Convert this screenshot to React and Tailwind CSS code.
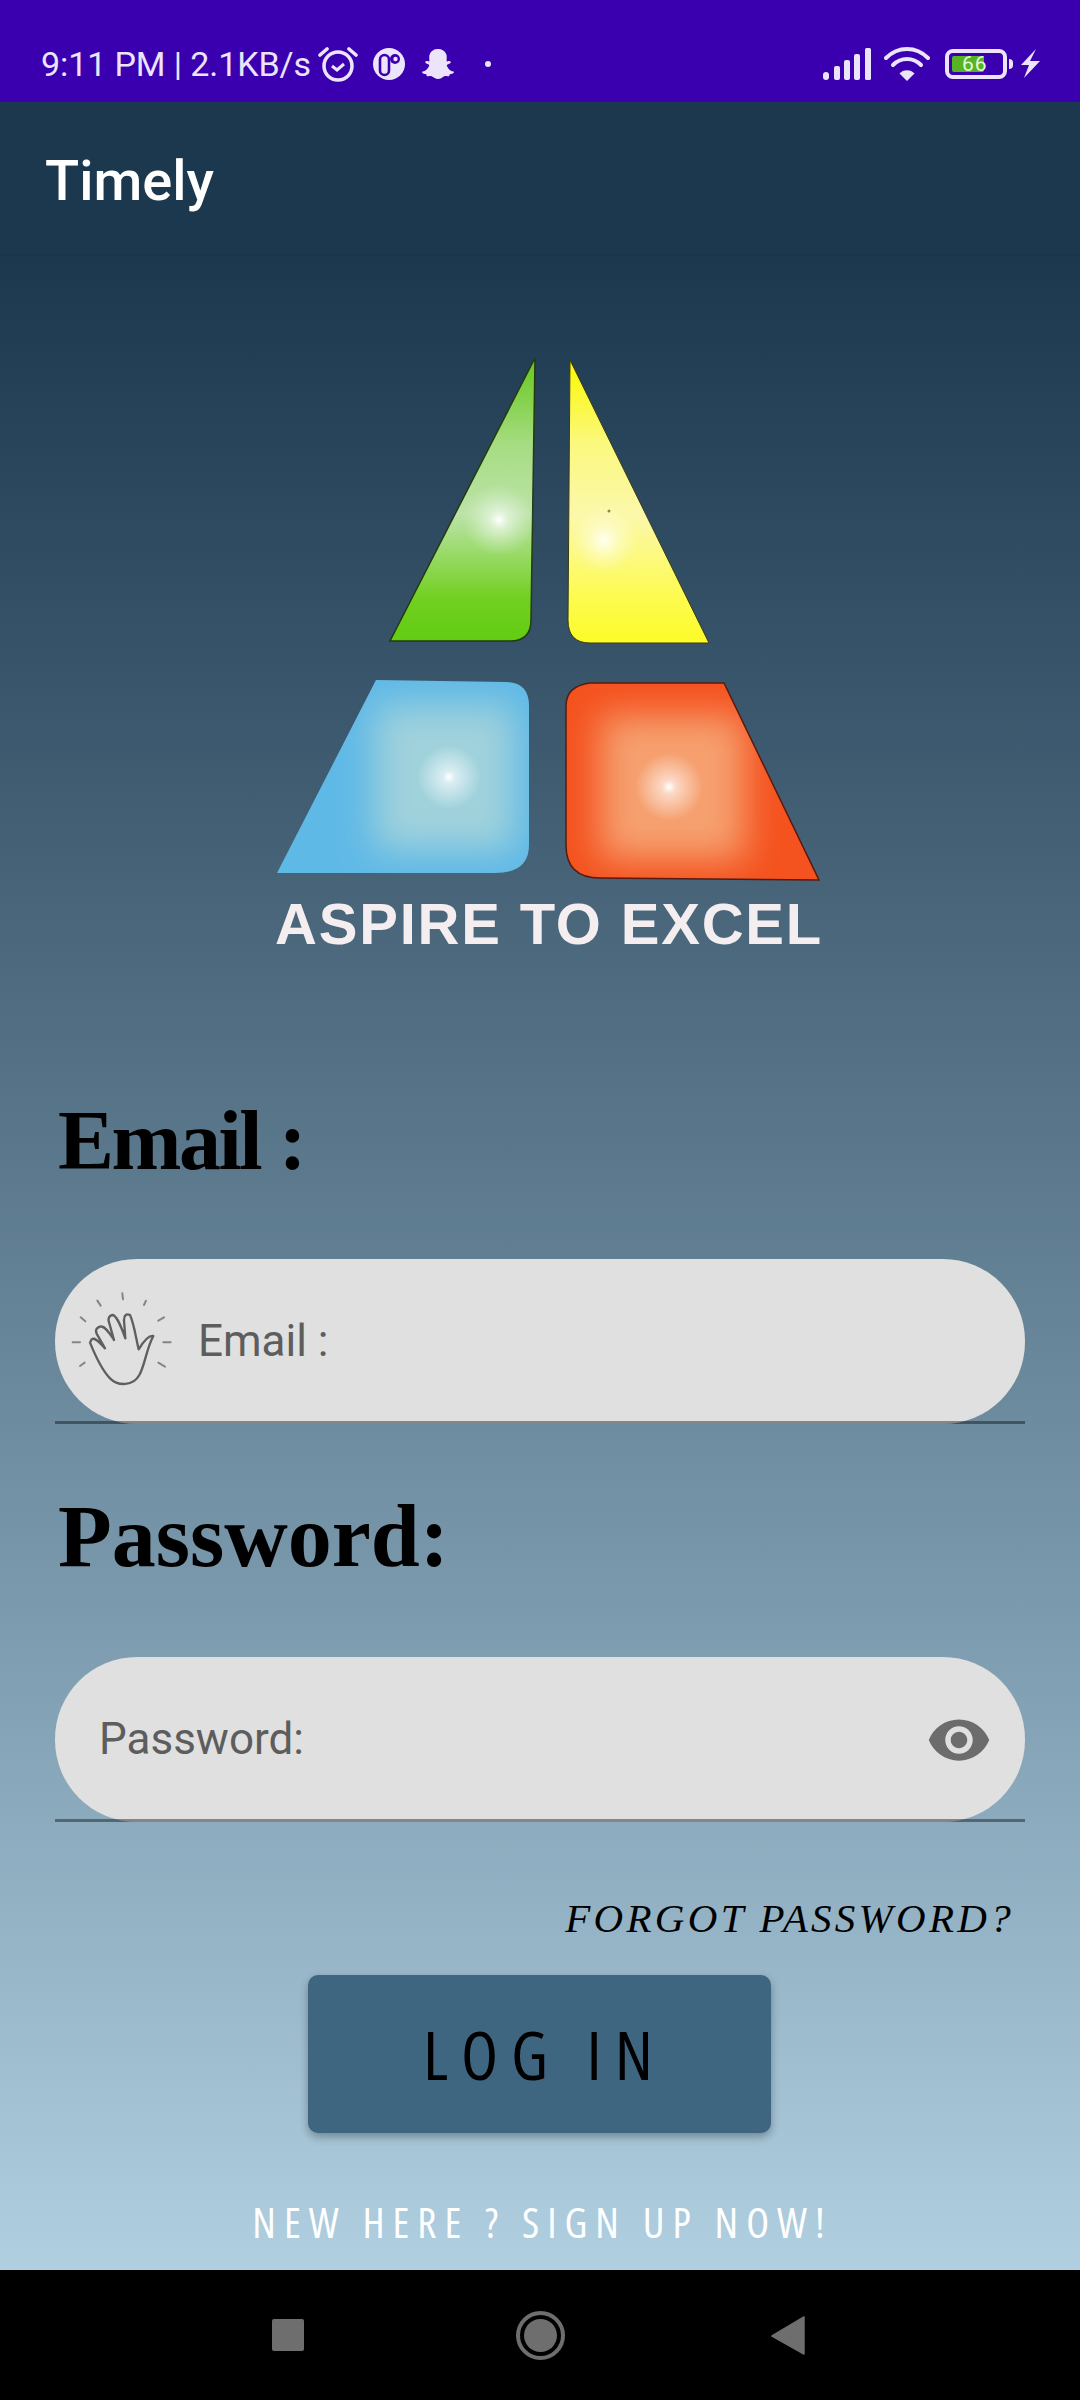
import { FaSnapchatGhost } from "react-icons/fa";

const headingFont = "font-['Liberation_Serif',serif]";
const labelFont = "font-['Open_Sans',sans-serif] font-stretch-semi-condensed";
const roboto = "font-['Roboto',sans-serif]";

const StatusBar = () => (
    <div className="h-[102px] shrink-0 bg-[#3a00b0] text-[#ece4fa] flex items-center pl-[41px] pr-[40px] pt-[25px]">
        <span className={`${roboto} text-[34px] tracking-[-0.1px] leading-none whitespace-nowrap`}>
            9:11 PM | 2.1KB/s
        </span>
        <svg viewBox="0 0 40 36" className="w-[40px] h-[36px] ml-[7px]" fill="none" stroke="currentColor">
            <circle cx="20" cy="20" r="14" strokeWidth="3.5" />
            <path d="M14 20l5 4 7-6" strokeWidth="3" />
            <path d="M2 9l7-6M38 9l-7-6" strokeWidth="3.6" strokeLinecap="round" />
        </svg>
        <svg viewBox="0 0 32 34" className="w-[32px] h-[34px] ml-[15px]">
            <circle cx="16" cy="17" r="16" fill="currentColor" />
            <rect x="7" y="8" width="9" height="20" rx="4.500" fill="currentColor" stroke="#3a00b0" strokeWidth="2.6" />
            <circle cx="22" cy="12" r="5" fill="#3a00b0" />
            <circle cx="22.500" cy="12" r="2.2" fill="currentColor" />
        </svg>
        <FaSnapchatGhost className="w-[34px] h-[32px] ml-[16px]" />
        <span className="w-[6px] h-[6px] rounded-full bg-current ml-[30px]" />
        <div className="flex-1" />
        <svg viewBox="0 0 48 32" className="w-[48px] h-[32px]" fill="currentColor">
            <rect x="0" y="24" width="6" height="8" rx="3" />
            <rect x="11" y="18" width="6" height="14" rx="2" />
            <rect x="21" y="12" width="6" height="20" rx="2" />
            <rect x="31" y="6" width="6" height="26" rx="2" />
            <rect x="42" y="0" width="6" height="32" rx="1.500" />
        </svg>
        <svg viewBox="0 0 46 34" className="w-[46px] h-[34px] ml-[13px]" fill="none" stroke="currentColor" strokeWidth="4" strokeLinecap="round">
            <path d="M2 11C14 -1 32 -1 44 11" />
            <path d="M9 18C17 10 29 10 37 18" />
            <path d="M23 34l-7.500-7.500C19 22 27 22 30.500 26.500z" fill="currentColor" stroke="none" />
        </svg>
        <div className="relative w-[62px] h-[30px] ml-[15px] rounded-[8px] border-[4px] border-current">
            <div className="absolute left-[3px] top-[3px] bottom-[3px] w-[32px] rounded-[2px] bg-[#56b424]" />
            <span className={`${roboto} absolute left-[13px] top-0 text-[21px] leading-[22px] tracking-[1px] text-[#e6f7da]`}>
                66
            </span>
        </div>
        <span className="w-[4px] h-[10px] ml-[2px] rounded-r-full bg-current" />
        <svg viewBox="0 0 19 29" className="w-[19px] h-[29px] ml-[8px]" fill="currentColor">
            <path d="M15 0L9 12H19L3 29L8 16H0z" />
        </svg>
    </div>
);

const AppBar = () => (
    <div className="h-[154px] shrink-0 bg-[#1c384e] border-b-[2px] border-[#1a3449] flex items-center pl-[45px]">
        <span className={`${roboto} text-[56px] font-medium leading-none text-white pt-[6px]`}>
            Timely
        </span>
    </div>
);

const Logo = () => (
    <div className="flex flex-col items-start pl-[275px] pt-[99px]">
        <svg viewBox="275 355 545 530" className="w-[545px] h-[530px]">
            <defs>
                <linearGradient id="greenBase" x1="0" y1="358" x2="0" y2="641" gradientUnits="userSpaceOnUse">
                    <stop offset="0" stopColor="#66c81c" />
                    <stop offset="0.3" stopColor="#a5dc80" />
                    <stop offset="0.55" stopColor="#bce3a8" />
                    <stop offset="0.85" stopColor="#72d020" />
                    <stop offset="1" stopColor="#62cc12" />
                </linearGradient>
                <radialGradient id="greenSpot" cx="499" cy="520" r="36" gradientUnits="userSpaceOnUse">
                    <stop offset="0" stopColor="#ffffff" />
                    <stop offset="0.25" stopColor="#eef8ea" stopOpacity="0.7" />
                    <stop offset="1" stopColor="#d8eed0" stopOpacity="0" />
                </radialGradient>
                <linearGradient id="yellowBase" x1="0" y1="360" x2="0" y2="643" gradientUnits="userSpaceOnUse">
                    <stop offset="0" stopColor="#fcf800" />
                    <stop offset="0.3" stopColor="#fbf880" />
                    <stop offset="0.55" stopColor="#fbf8ac" />
                    <stop offset="0.85" stopColor="#fdfb4c" />
                    <stop offset="1" stopColor="#fdfb28" />
                </linearGradient>
                <radialGradient id="yellowSpot" cx="604" cy="540" r="34" gradientUnits="userSpaceOnUse">
                    <stop offset="0" stopColor="#fffff0" />
                    <stop offset="1" stopColor="#fdfbc0" stopOpacity="0" />
                </radialGradient>
                <radialGradient id="whiteSpot" cx="0.5" cy="0.5" r="0.5">
                    <stop offset="0" stopColor="#ffffff" />
                    <stop offset="0.2" stopColor="#ffffff" stopOpacity="0.6" />
                    <stop offset="1" stopColor="#ffffff" stopOpacity="0" />
                </radialGradient>
                <filter id="soft" x="-30%" y="-30%" width="160%" height="160%">
                    <feGaussianBlur stdDeviation="18" />
                </filter>
                <clipPath id="blueClip">
                    <path d="M376 680L505 682Q529 682 529 706V845Q529 873 495 873H277z" />
                </clipPath>
                <clipPath id="redClip">
                    <path d="M590 683H724L819 880L600 878Q566 878 566 845V706Q566 686 590 683z" />
                </clipPath>
            </defs>
            <path d="M535 358L531 620Q531 641 510 641H390z" fill="url(#greenBase)" stroke="#243a10" strokeWidth="1.500" />
            <path d="M535 358L531 620Q531 641 510 641H390z" fill="url(#greenSpot)" />
            <path d="M570 360L709 643H590Q568 643 568 620z" fill="url(#yellowBase)" stroke="#3a3a10" strokeWidth="1" />
            <path d="M570 360L709 643H590Q568 643 568 620z" fill="url(#yellowSpot)" />
            <circle cx="609" cy="511" r="1.500" fill="#8a8a50" />
            <g clipPath="url(#blueClip)">
                <rect x="270" y="675" width="265" height="205" fill="#5fb9e6" />
                <rect x="375" y="705" width="140" height="145" fill="#a0d2dc" filter="url(#soft)" />
                <circle cx="449" cy="777" r="32" fill="url(#whiteSpot)" />
            </g>
            <g clipPath="url(#redClip)">
                <rect x="560" y="678" width="265" height="205" fill="#f4521e" />
                <rect x="600" y="715" width="145" height="145" fill="#f6a070" filter="url(#soft)" />
                <circle cx="669" cy="787" r="34" fill="url(#whiteSpot)" />
            </g>
            <path d="M590 683H724L819 880L600 878Q566 878 566 845V706Q566 686 590 683z" fill="none" stroke="#5a1a10" strokeWidth="1.500" />
        </svg>
        <div className="font-['Liberation_Sans',sans-serif] font-bold text-[58px] leading-none tracking-[1.8px] text-[#f5eef0] whitespace-nowrap mt-[10px]">
            ASPIRE TO EXCEL
        </div>
    </div>
);

const HandIcon = () => (
    <svg viewBox="0 0 450 390" className="w-[150px] h-[130px] absolute left-[-5px] top-[1px] blur-[0.7px]" fill="none" stroke="#5f5f5f" strokeLinecap="round" strokeLinejoin="round">
        <path
            strokeWidth="7"
            d="M120 248C135 285 155 330 180 355C205 380 250 378 268 345C285 315 288 270 310 228C296 226 280 245 266 268C258 235 252 190 240 165C230 160 222 165 222 180L226 235C215 205 205 175 190 165C178 165 172 175 178 190L192 240C180 222 165 195 150 200C135 205 135 215 145 230L165 265C150 250 135 230 125 238z"
        />
        <g strokeWidth="6" opacity="0.7">
            <path d="M217 100L219 118M142 122L152 137M92 172L106 184M68 247H90M90 318L104 308M282 135L288 122M325 182L342 172M340 247H362M325 308L345 320" />
        </g>
    </svg>
);

const EyeIcon = () => (
    <svg viewBox="0 0 24 24" className="w-[66px] h-[66px] shrink-0" fill="#6c6c6c">
        <path d="M12 4.500C7 4.500 2.730 7.610 1 12c1.730 4.390 6 7.500 11 7.500s9.270-3.110 11-7.500c-1.730-4.390-6-7.500-11-7.500zM12 17c-2.760 0-5-2.240-5-5s2.240-5 5-5 5 2.240 5 5-2.240 5-5 5zm0-8c-1.660 0-3 1.340-3 3s1.340 3 3 3 3-1.340 3-3-1.340-3-3-3z" />
    </svg>
);

const Field = ({ placeholder, type = "text", paddingClass, icon, trailing }) => (
    <div className={`relative h-[165px] w-[970px] ml-[55px] rounded-[82px] bg-[#e0e0e0] flex items-center ${paddingClass}`}>
        {icon}
        <input
            type={type}
            placeholder={placeholder}
            className={`${roboto} flex-1 min-w-0 bg-transparent outline-none text-[44px] pb-[2px] placeholder:text-[#5d5d5d] placeholder:opacity-100`}
        />
        {trailing}
        <div className="absolute left-0 right-0 bottom-0 h-[3px] bg-black/40" />
    </div>
);

const App = () => (
    <div className="w-[1080px] h-[2400px] flex flex-col overflow-hidden">
        <StatusBar />
        <AppBar />
        <main className="flex-1 flex flex-col bg-gradient-to-b from-[#1c384e] to-[#b0cfe0]">
            <Logo />
            <h2 className={`${headingFont} font-bold text-[84px] leading-none tracking-[-2.5px] text-black ml-[58px] mt-[146px]`}>
                Email :
            </h2>
            <div className="mt-[76px]">
                <Field placeholder="Email :" paddingClass="pl-[143px]" icon={<HandIcon />} />
            </div>
            <h2 className={`${headingFont} font-bold text-[88px] leading-none text-black ml-[58px] mt-[69px]`}>
                Password:
            </h2>
            <div className="mt-[76px]">
                <Field placeholder="Password:" type="password" paddingClass="pl-[44px] pr-[33px]" trailing={<EyeIcon />} />
            </div>
            <div className={`${headingFont} italic text-[41px] leading-none tracking-[3.3px] text-black text-right mr-[66px] mt-[76px]`}>
                FORGOT PASSWORD?
            </div>
            <button className="w-[463px] h-[158px] ml-[308px] mt-[36px] rounded-[10px] bg-[#3f6681] shadow-[0_4px_8px_rgba(0,0,0,0.3)] flex items-center justify-center">
                <span className={`${labelFont} text-[68px] leading-none tracking-[13px] text-black pl-[10px]`}>LOG IN</span>
            </button>
            <div className={`${labelFont} text-[42px] leading-none tracking-[8px] text-white text-center ml-[5px] mt-[68px]`}>
                NEW HERE ? SIGN UP NOW!
            </div>
        </main>
        <nav className="h-[130px] shrink-0 bg-black relative">
            <svg viewBox="0 0 1080 130" className="w-[1080px] h-[130px]">
                <rect x="272" y="49" width="32" height="32" rx="2" fill="#6e6e6e" />
                <circle cx="540.500" cy="65.500" r="22.500" fill="none" stroke="#6e6e6e" strokeWidth="4" />
                <circle cx="540.500" cy="65.500" r="16.500" fill="#6e6e6e" />
                <path d="M804 47L772 66L804 84z" fill="#6e6e6e" stroke="#6e6e6e" strokeWidth="1.500" strokeLinejoin="round" />
            </svg>
        </nav>
    </div>
);

export default App;
